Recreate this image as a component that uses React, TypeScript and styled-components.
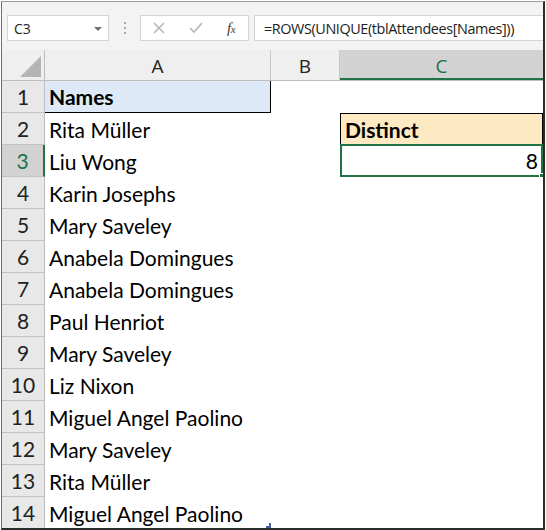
import React from "react";
import styled, { createGlobalStyle, css } from "styled-components";

const GlobalStyle = createGlobalStyle`
  html, body {
    margin: 0;
    padding: 0;
    background: #ffffff;
  }
  * {
    box-sizing: border-box;
  }
`;

const GREEN = "#217346";

const Frame = styled.div`
  margin: 1px 0 0 1px;
  width: 544px;
  height: 529px;
  border-top: 1px solid #9c9c9c;
  border-left: 1px solid #6e6e6e;
  border-right: 2px solid #2b2b2b;
  border-bottom: 2px solid #2b2b2b;
  overflow: hidden;
  font-family: Lato, "Liberation Sans", sans-serif;
  color: #000;
`;

const Toolbar = styled.div`
  height: 48px;
  background: #f3f3f3;
  display: flex;
  align-items: flex-start;
  padding: 13px 0 0 5px;
`;

const NameBox = styled.div`
  width: 102px;
  height: 26px;
  background: #fff;
  border: 1px solid #d4d4d4;
  display: flex;
  align-items: center;
  justify-content: space-between;
  padding: 0 6px 0 6px;
  font-family: "Open Sans", "Liberation Sans", sans-serif;
  font-size: 14px;
  color: #222;
`;

const Caret = styled.span`
  width: 0;
  height: 0;
  border-left: 4px solid transparent;
  border-right: 4px solid transparent;
  border-top: 4px solid #6f6f6f;
  margin-top: 1px;
`;

const Grip = styled.div`
  width: 31px;
  height: 26px;
  display: flex;
  flex-direction: column;
  align-items: center;
  justify-content: center;
  gap: 3px;

  span {
    width: 2px;
    height: 2px;
    background: #a8a8a8;
  }
`;

const FuncButtons = styled.div`
  width: 109px;
  height: 26px;
  background: #fff;
  border: 1px solid #d4d4d4;
  display: flex;
  align-items: center;
`;

const FuncIcon = styled.span<{ $w: number }>`
  width: ${(p) => p.$w}px;
  display: flex;
  align-items: center;
  justify-content: center;
`;

const Fx = styled.span`
  font-family: "Liberation Serif", serif;
  font-style: italic;
  font-size: 15px;
  color: #3c3c3c;
  letter-spacing: -0.5px;

  sub {
    font-size: 11px;
    vertical-align: baseline;
  }
`;

const FormulaBox = styled.div`
  flex: 1;
  margin-left: 5px;
  height: 26px;
  background: #fff;
  border: 1px solid #d4d4d4;
  border-right: none;
  display: flex;
  align-items: center;
  padding-left: 9px;
  font-family: "Open Sans", "Liberation Sans", sans-serif;
  font-size: 14.4px;
  letter-spacing: -0.4px;
  color: #222;
  white-space: nowrap;
`;

const cols = css`
  display: grid;
  grid-template-columns: 43px 226px 69px 1fr;
`;

const HeaderRow = styled.div`
  ${cols};
  height: 31px;
  background: #efefef;
  border-bottom: 1px solid #bdbdbd;
`;

const Corner = styled.div`
  border-right: 1px solid #bdbdbd;
  position: relative;

  &::after {
    content: "";
    position: absolute;
    right: 3px;
    bottom: 3px;
    width: 0;
    height: 0;
    border-left: 21px solid transparent;
    border-bottom: 21px solid #b4b4b4;
  }
`;

const ColHead = styled.div<{ $active?: boolean; $edge?: boolean }>`
  display: flex;
  align-items: center;
  justify-content: center;
  font-family: "Open Sans", "Liberation Sans", sans-serif;
  font-size: 19px;
  padding-top: 1px;
  color: ${(p) => (p.$active ? GREEN : "#222")};
  background: ${(p) => (p.$active ? "#d3d3d3" : "transparent")};
  border-right: ${(p) => (p.$edge ? "1px solid #c8c8c8" : "none")};
  box-shadow: ${(p) => (p.$active ? `inset 0 -2px 0 ${GREEN}` : "none")};
`;

const Row = styled.div`
  ${cols};
  height: 32px;
`;

const RowHead = styled.div<{ $active?: boolean }>`
  display: flex;
  align-items: center;
  justify-content: center;
  font-size: 21px;
  background: ${(p) => (p.$active ? "#d2d2d2" : "#e8e8e8")};
  color: ${(p) => (p.$active ? GREEN : "#222")};
  border-bottom: 1px solid #c3c3c3;
  border-right: ${(p) => (p.$active ? `2px solid ${GREEN}` : "1px solid #bdbdbd")};
`;

const Cell = styled.div<{ $variant?: "names" | "distinct" | "selected" }>`
  position: relative;
  display: flex;
  align-items: center;
  padding: 0 4px;
  font-size: 21px;
  white-space: nowrap;

  ${(p) =>
    p.$variant === "names" &&
    css`
      background: #dde9f6;
      font-weight: 700;
      border-right: 1px solid #000;
      border-bottom: 1px solid #000;
    `}

  ${(p) =>
    p.$variant === "distinct" &&
    css`
      background: #fde9c2;
      font-weight: 700;
      border-left: 1px solid #000;
      border-top: 1px solid #000;
      border-right: 1px solid #000;
    `}

  ${(p) =>
    p.$variant === "selected" &&
    css`
      justify-content: flex-end;
      border: 2px solid ${GREEN};
      margin-top: -1px;
      padding-right: 3px;
    `}
`;

const FillHandle = styled.span`
  position: absolute;
  right: -3px;
  bottom: -3px;
  width: 5px;
  height: 5px;
  background: ${GREEN};
  border: 1px solid #fff;
`;

const ResizeMark = styled.span`
  position: absolute;
  right: 0;
  bottom: 1px;
  width: 5px;
  height: 5px;
  border-right: 2px solid #4a5aa0;
  border-bottom: 2px solid #4a5aa0;
`;

const names = [
  "Rita Müller",
  "Liu Wong",
  "Karin Josephs",
  "Mary Saveley",
  "Anabela Domingues",
  "Anabela Domingues",
  "Paul Henriot",
  "Mary Saveley",
  "Liz Nixon",
  "Miguel Angel Paolino",
  "Mary Saveley",
  "Rita Müller",
  "Miguel Angel Paolino",
];

const App = () => {
  return (
    <>
      <GlobalStyle />
      <Frame>
        <Toolbar>
          <NameBox>
            <span>C3</span>
            <Caret />
          </NameBox>
          <Grip>
            <span />
            <span />
            <span />
          </Grip>
          <FuncButtons>
            <FuncIcon $w={36}>
              <svg width="12" height="12" viewBox="0 0 12 12">
                <path d="M1 1 L11 11 M11 1 L1 11" stroke="#b5b5b5" strokeWidth="1.5" />
              </svg>
            </FuncIcon>
            <FuncIcon $w={38}>
              <svg width="14" height="12" viewBox="0 0 14 12">
                <path d="M1 6 L5 10 L13 1" stroke="#b5b5b5" strokeWidth="1.6" fill="none" />
              </svg>
            </FuncIcon>
            <FuncIcon $w={32}>
              <Fx>
                f<sub>x</sub>
              </Fx>
            </FuncIcon>
          </FuncButtons>
          <FormulaBox>=ROWS(UNIQUE(tblAttendees[Names]))</FormulaBox>
        </Toolbar>

        <HeaderRow>
          <Corner />
          <ColHead $edge>A</ColHead>
          <ColHead $edge>B</ColHead>
          <ColHead $active>C</ColHead>
        </HeaderRow>

        <Row>
          <RowHead>1</RowHead>
          <Cell $variant="names">Names</Cell>
          <Cell />
          <Cell />
        </Row>

        {names.map((name, i) => {
          const n = i + 2;
          return (
            <Row key={n}>
              <RowHead $active={n === 3}>{n}</RowHead>
              <Cell>
                {name}
                {n === 14 && <ResizeMark />}
              </Cell>
              <Cell />
              {n === 2 && <Cell $variant="distinct">Distinct</Cell>}
              {n === 3 && (
                <Cell $variant="selected">
                  8
                  <FillHandle />
                </Cell>
              )}
              {n > 3 && <Cell />}
            </Row>
          );
        })}
      </Frame>
    </>
  );
};

export default App;
